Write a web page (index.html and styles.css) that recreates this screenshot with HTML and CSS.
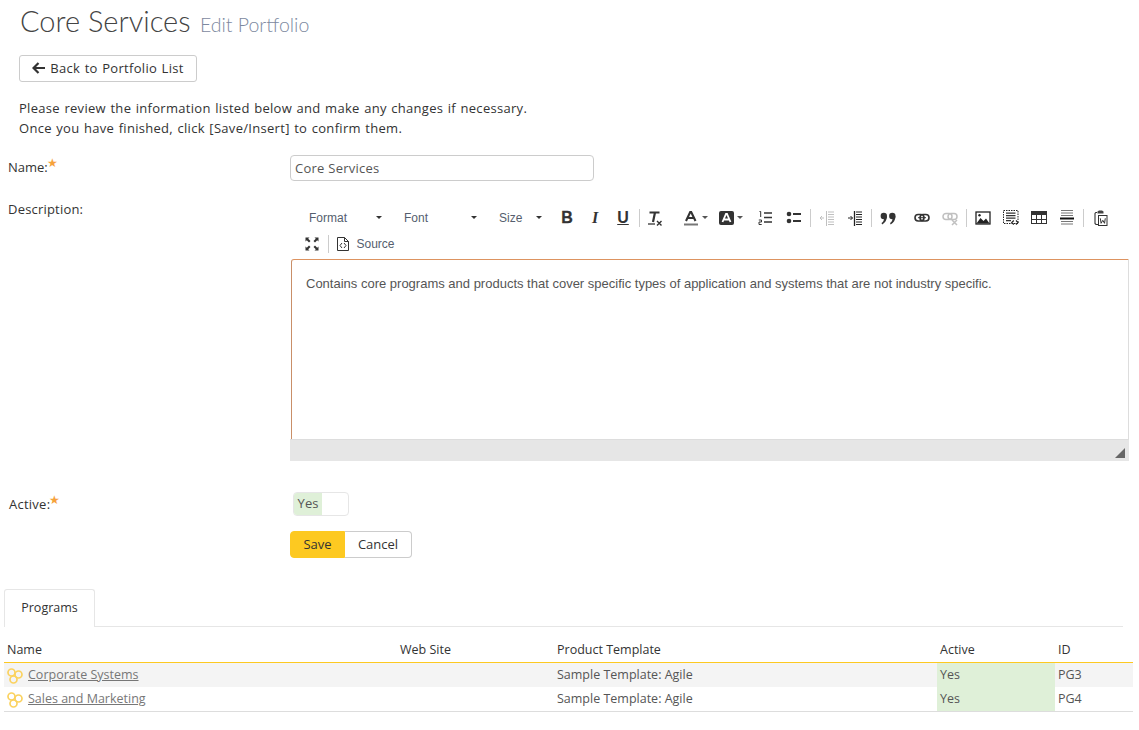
FILE: index.html
```html
<!DOCTYPE html>
<html lang="en">
<head>
<meta charset="utf-8">
<title>Core Services</title>
<link rel="stylesheet" href="styles.css">
</head>
<body>
<svg class="defs" width="0" height="0" aria-hidden="true">
  <defs>
    <g id="hex">
      <g fill="none" stroke="#fbd25f" stroke-width="1.7">
        <circle cx="4.500" cy="5.500" r="3.500"/>
        <circle cx="11.500" cy="7.500" r="3.500"/>
        <circle cx="6.500" cy="12.500" r="3.500"/>
      </g>
    </g>
  </defs>
</svg>
<header class="title"><span class="title-main">Core Services</span> <span class="title-sub">Edit Portfolio</span></header>
<a class="btn back" href="#"><svg width="14" height="12" viewBox="0 0 14 12"><path d="M6.500 1 1.500 6l5 5M2 6h11" fill="none" stroke="#333" stroke-width="2.200"/></svg>Back to Portfolio List</a>
<p class="intro">Please review the information listed below and make any changes if necessary.<br>Once you have finished, click [Save/Insert] to confirm them.</p>

<div class="row row-name">
  <label class="lbl">Name:<span class="req">★</span></label>
  <input class="text" value="Core Services">
</div>

<div class="row row-desc">
  <label class="lbl">Description:</label>
  <div class="editor">
    <div class="tb">
      <span class="combo c1">Format<i class="car"></i></span>
      <span class="combo c1">Font<i class="car"></i></span>
      <span class="combo c2">Size<i class="car"></i></span>
      <span class="ib gl bold">B</span>
      <span class="ib gl ital">I</span>
      <span class="ib gl und">U</span>
      <span class="sep"></span>
      <span class="ib"><svg width="16" height="16" viewBox="0 0 16 16"><path d="M2.500 2.500h10M8 2.500 6 12" fill="none" stroke="#333" stroke-width="2.200"/><path d="M1 14h7" stroke="#333" stroke-width="1.300"/><path d="m10 11 4.500 4.500m0-4.500L10 15.500" stroke="#333" stroke-width="1.400"/></svg></span>
      <span class="ib wide s1"><svg width="14" height="16" viewBox="0 0 14 16"><path d="M2 11 6.200 2h1L11.500 11M3.700 8h6" fill="none" stroke="#333" stroke-width="2.100"/><path d="M0 14.500h14" stroke="#777" stroke-width="2"/></svg><i class="car sm"></i></span>
      <span class="ib wide s2"><svg width="16" height="16" viewBox="0 0 16 16"><rect x="0" y="1" width="15" height="14" rx="2" fill="#333"/><path d="M3.500 12 7 4h1L11.500 12M5 9.500h5" fill="none" stroke="#fff" stroke-width="1.800"/></svg><i class="car sm"></i></span>
      <span class="ib s3"><svg width="16" height="16" viewBox="0 0 16 16"><path d="M7 3h8M7 7.500h8M7 12h8" stroke="#333" stroke-width="1.500"/><path d="M2.500 1.500h1.200V7M1.800 10h2.700v2H2v2.500h2.700" fill="none" stroke="#333"/></svg></span>
      <span class="ib s6"><svg width="16" height="16" viewBox="0 0 16 16"><circle cx="3" cy="4" r="2.300" fill="#333"/><circle cx="3" cy="11" r="2.300" fill="#333"/><path d="M7 4h8M7 11h8" stroke="#333" stroke-width="2"/></svg></span>
      <span class="sep"></span>
      <span class="ib off s7"><svg width="16" height="16" viewBox="0 0 16 16"><path d="M9 2h6M9 4.500h6M9 7h6M9 9.500h6M9 12h6M9 14.500h6" stroke="#333"/><path d="M7.500 1v15" stroke="#333"/><path d="M1 8h4M3 6 1 8l2 2" fill="none" stroke="#333"/></svg></span>
      <span class="ib"><svg width="16" height="16" viewBox="0 0 16 16"><path d="M9 2h6M9 4.500h6M9 7h6M9 9.500h6M9 12h6M9 14.500h6" stroke="#222"/><path d="M7.500 1v15" stroke="#222" stroke-width="1.300"/><path d="M1 8h4.500M3.500 6l2 2-2 2" fill="none" stroke="#222"/></svg></span>
      <span class="sep"></span>
      <span class="ib s8"><svg width="16" height="16" viewBox="0 0 16 16"><circle cx="3.800" cy="6" r="3.200" fill="#333"/><path d="M7 6c0 4-2 7-4.800 8.500L1.500 13C3 12 4 10.500 4 9z" fill="#333"/><circle cx="12.300" cy="6" r="3.200" fill="#333"/><path d="M15.500 6c0 4-2 7-4.800 8.500L10 13c1.500-1 2.500-2.500 2.500-4z" fill="#333"/></svg></span>
      <span class="ib s4"><svg width="16" height="16" viewBox="0 0 16 16"><rect x="1" y="4.500" width="9" height="6.500" rx="3.200" fill="none" stroke="#333" stroke-width="1.600"/><rect x="6" y="4.500" width="9" height="6.500" rx="3.200" fill="none" stroke="#333" stroke-width="1.600"/><path d="M4 7.700h8" stroke="#333"/></svg></span>
      <span class="ib off"><svg width="16" height="16" viewBox="0 0 16 16"><rect x="1" y="3.500" width="9" height="6" rx="3" fill="none" stroke="#333" stroke-width="1.500"/><rect x="6" y="3.500" width="9" height="6" rx="3" fill="none" stroke="#333" stroke-width="1.500"/><path d="m10 10 5 5m0-5-5 5" stroke="#333" stroke-width="1.500"/></svg></span>
      <span class="sep"></span>
      <span class="ib s9"><svg width="16" height="16" viewBox="0 0 16 16"><rect x="1" y="2" width="14" height="12" fill="#fff" stroke="#222" stroke-width="1.300"/><path d="M1.500 13.500 5.500 8l3 3 2.500-2.500 3.500 5z" fill="#222"/><circle cx="4.500" cy="5.300" r="1.200" fill="#222"/></svg></span>
      <span class="ib"><svg width="16" height="16" viewBox="0 0 16 16"><rect x=".5" y=".5" width="14.500" height="13" fill="none" stroke="#222" stroke-dasharray="1.500 1"/><path d="M3 3.200h9.500M3 5.700h9.500M3 8.200h9.500M3 10.700h5" stroke="#333" stroke-width="1.300"/><path d="M10.800 10.500l-2 2 2 2M13 10.500l2 2-2 2" fill="none" stroke="#222" stroke-width="1.200"/></svg></span>
      <span class="ib"><svg width="16" height="16" viewBox="0 0 16 16"><rect x="0" y="1" width="16" height="4" fill="#333"/><rect x=".5" y="1.500" width="15" height="12" fill="none" stroke="#333"/><path d="M.5 9.500h15M5.500 5v9M10.500 5v9" stroke="#333"/></svg></span>
      <span class="ib"><svg width="16" height="16" viewBox="0 0 16 16"><path d="M2 .5h12M2 3h12M2 5.500h12M2 11.500h12M2 14h12" stroke="#777"/><path d="M1 8.500h14" stroke="#111" stroke-width="2"/></svg></span>
      <span class="sep"></span>
      <span class="ib s10"><svg width="16" height="16" viewBox="0 0 16 16"><path d="M4 2.500H2.800L2 3.500V13.500l1 1h2" fill="none" stroke="#333" stroke-width="1.100"/><path d="M4.500 3.500V1.500l1.500-1h3l1.500 1v2z" fill="#444"/><rect x="5.500" y="5.500" width="8.500" height="10" fill="#fff" stroke="#333"/><path d="M7.300 8.300l.8 5 1.700-3 1.700 3 .8-5" fill="none" stroke="#333"/></svg></span>
      <span class="ib"><svg width="16" height="16" viewBox="0 0 16 16"><path d="M1.500 1.500h4l-1.300 1.300L6.500 5 5 6.500 2.800 4.200 1.500 5.500zM14.500 1.500v4l-1.300-1.300L11 6.500 9.500 5l2.300-2.200-1.300-1.300zM1.500 14.500v-4l1.300 1.300L5 9.500 6.500 11l-2.300 2.200 1.300 1.300zM14.500 14.500h-4l1.300-1.300L9.500 11 11 9.500l2.200 2.300 1.300-1.300z" fill="#333"/></svg></span>
      <span class="sep"></span>
      <span class="ib src"><svg width="12" height="14" viewBox="0 0 12 14"><path d="M.5.500h7l4 4v9H.5zM7.500.500v4h4" fill="#fff" stroke="#333"/><path d="M5 6 3 8.500 5 11M7 6l2 2.500L7 11" fill="none" stroke="#333"/></svg>Source</span>
    </div>
    <div class="area">Contains core programs and products that cover specific types of application and systems that are not industry specific.</div>
    <div class="status"><i class="grip"></i></div>
  </div>
</div>

<div class="row row-active">
  <label class="lbl">Active:<span class="req">★</span></label>
  <span class="toggle"><span class="on">Yes</span></span>
</div>

<div class="actions">
  <a class="btn save" href="#">Save</a><a class="btn cancel" href="#">Cancel</a>
</div>

<div class="tabs"><span class="tab">Programs</span></div>

<table class="grid">
  <thead>
    <tr><th class="w1">Name</th><th class="w2">Web Site</th><th class="w3">Product Template</th><th class="w4">Active</th><th>ID</th></tr>
  </thead>
  <tbody>
    <tr class="alt">
      <td><span class="namecell"><svg class="hex" width="17" height="17" viewBox="0 0 17 17"><use href="#hex"/></svg><a href="#">Corporate Systems</a></span></td>
      <td></td><td>Sample Template: Agile</td><td class="yes">Yes</td><td>PG3</td>
    </tr>
    <tr>
      <td><span class="namecell"><svg class="hex" width="17" height="17" viewBox="0 0 17 17"><use href="#hex"/></svg><a href="#">Sales and Marketing</a></span></td>
      <td></td><td>Sample Template: Agile</td><td class="yes">Yes</td><td>PG4</td>
    </tr>
  </tbody>
</table>
</body>
</html>
```
FILE: styles.css
```css
* { box-sizing: border-box; }
html, body { margin: 0; padding: 0; background: #fff; }
body { font-family: "Open Sans", "Noto Sans", sans-serif; font-size: 13px; color: #333; width: 1139px; height: 730px; overflow: hidden; }
.defs { display: block; height: 0; }

.title { height: 55px; padding: 2px 0 0 20px; line-height: 38px; white-space: nowrap; }
.title-main { font-family: Lato, sans-serif; font-weight: 300; font-size: 29px; color: #444; }
.title-sub { font-family: Lato, sans-serif; font-weight: 300; font-size: 19.5px; color: #7d89a0; margin-left: 6px; }

.btn { display: inline-flex; align-items: center; justify-content: center; text-decoration: none; color: #333; border: 1px solid #ccc; background: #fff; padding-bottom: 1px; }
.back { margin-left: 19px; width: 178px; height: 27px; border-radius: 3px; gap: 4px; display: flex; letter-spacing: .3px; word-spacing: .8px; }

.intro { margin: 16px 0 0 19px; line-height: 20px; height: 40px; letter-spacing: .3px; word-spacing: .8px; }

.row { display: flex; }
.lbl { width: 282px; margin-left: 8px; flex: none; color: #333; }
.req { color: #f6a23c; font-size: 12px; vertical-align: 5px; line-height: 1; margin-left: -1px; }

.row-name { margin-top: 17px; height: 26px; align-items: flex-start; }
.row-name .lbl { line-height: 24px; }
.text { width: 304px; height: 26px; padding: 0 4px; border: 1px solid #ccc; border-radius: 4px; font: inherit; letter-spacing: .25px; color: #555; outline: 0; }

.row-desc { margin-top: 18px; height: 262px; }
.row-desc .lbl { line-height: 20px; letter-spacing: .2px; }
.editor { width: 839px; display: flex; flex-direction: column; }
.tb { display: flex; flex-wrap: wrap; height: 61px; padding: 6px 0 0 8px; width: 839px; font-family: "Liberation Sans", Arial, sans-serif; font-size: 12px; color: #555e6e; align-content: flex-start; }
.combo { height: 26px; display: flex; align-items: center; padding-left: 11px; position: relative; margin-right: 5px; }
.c1 { width: 90px; }
.c2 { width: 60px; }
.car { position: absolute; right: 6px; top: 11px; width: 0; height: 0; border-left: 3px solid transparent; border-right: 3px solid transparent; border-top: 3px solid #333; }
.car.sm { right: 1px; top: 11px; border-top-color: #555; }
.ib { width: 28px; height: 26px; display: flex; align-items: center; justify-content: center; position: relative; flex: none; }
.gl { font-size: 16px; color: #333; font-family: "Liberation Sans", sans-serif; }
.bold { font-weight: 700; -webkit-text-stroke: .3px #333; }
.ital { font-family: "Liberation Serif", serif; font-weight: 700; font-style: italic; }
.und { font-weight: 700; text-decoration: underline; }
.off svg { opacity: .3; }
.sep { width: 1px; height: 18px; margin: 4px 1px 0 2px; background: #ccc; flex: none; }
.ib.wide { width: 32px; justify-content: flex-start; padding-left: 7px; }
.s1 { margin-left: 8px; }
.s2 { margin-left: 3px; }
.s3 { margin-left: 7px; }
.s4 { margin-left: 6px; }
.s6 { margin-left: 1px; }
.s7 { margin-left: 1px; }
.s8 { margin-left: 1px; }
.s9 { margin-left: 1px; }
.s10 { margin-left: 2px; }
.src { width: 66px; gap: 7px; font-size: 12px; color: #555e6e; margin-left: 3px; }

.area { height: 180px; flex: none; margin-left: 1px; margin-top: -1px; padding: 15px 14px; border-top: 1px solid #dd9360; border-left: 1px solid #c98f68; border-right: 1px solid #ddd; border-top-left-radius: 3px; font-family: "Liberation Sans", Arial, sans-serif; font-size: 13px; color: #555; line-height: 18px; }
.status { height: 22px; background: #e6e6e6; position: relative; border-top: 1px solid #ddd; }
.grip { position: absolute; right: 4px; bottom: 3px; width: 0; height: 0; border-left: 10px solid transparent; border-bottom: 10px solid #666; }

.row-active { margin-top: 31px; height: 24px; }
.row-active .lbl { line-height: 24px; margin-left: 9px; width: 284px; letter-spacing: .25px; }
.toggle { width: 56px; height: 24px; border: 1px solid #e6e6e6; border-radius: 4px; display: block; overflow: hidden; }
.on { display: block; width: 28px; height: 22px; line-height: 20px; background: #dff0d8; color: #555; text-align: center; }

.actions { margin: 15px 0 0 290px; display: flex; height: 27px; }
.save { width: 55px; background: #fdc921; border-color: #fdc921; border-radius: 4px 0 0 4px; }
.cancel { width: 67px; border-left: 0; border-radius: 0 4px 4px 0; }

.tabs { margin: 31px 16px 0 4px; height: 38px; border-bottom: 1px solid #e6e6e6; font-size: 12.500px; }
.tab { display: block; width: 91px; height: 38px; line-height: 36px; text-align: center; border: 1px solid #e6e6e6; border-bottom: 0; border-radius: 3px 3px 0 0; background: #fff; }

.grid { margin: 11px 0 0 4px; width: 1129px; border-collapse: separate; border-spacing: 0; table-layout: fixed; font-size: 12.500px; line-height: 16px; }
.grid th { text-align: left; font-weight: 400; padding: 0 3px; height: 25px; border-bottom: 1px solid #fdc921; color: #333; }
.grid td { height: 24px; padding: 0 3px; color: #555; }
.w1 { width: 393px; }
.w2 { width: 157px; }
.w3 { width: 383px; }
.w4 { width: 118px; }
.alt td { background: #f4f4f4; }
.grid .alt .yes, .grid .yes { background: #dff0d8; }
.grid tbody tr:last-child td { height: 25px; border-bottom: 1px solid #ddd; }
.namecell { display: flex; align-items: center; gap: 4px; height: 17px; }
.namecell a { color: #777; }
.hex { flex: none; margin-top: 1px; }
```
